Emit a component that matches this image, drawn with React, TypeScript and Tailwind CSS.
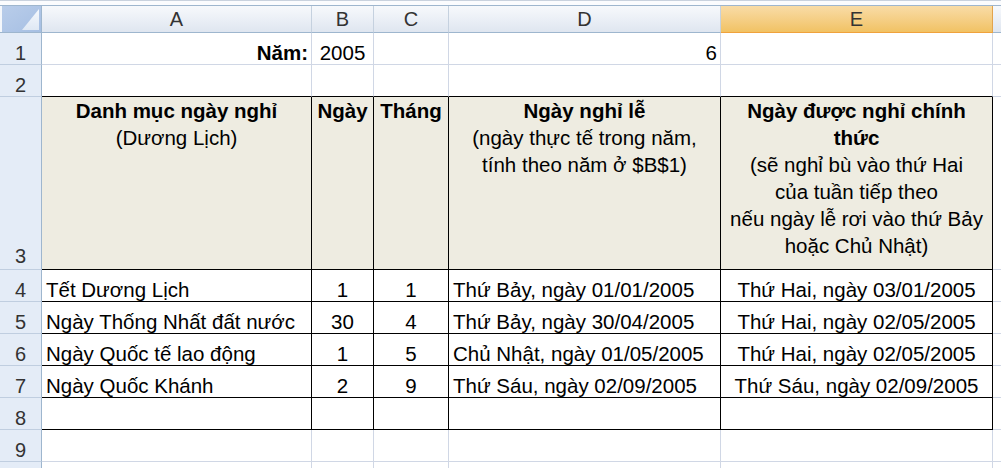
import type { ReactNode } from "react";

type Align = "left" | "center" | "right";

interface CellData {
  text?: string;
  bold?: boolean;
  align?: Align;
}

const COLS = [
  { key: "A", w: "w-[270px]" },
  { key: "B", w: "w-[62px]" },
  { key: "C", w: "w-[75px]" },
  { key: "D", w: "w-[272px]" },
  { key: "E", w: "w-[272px]" },
];

const ALIGN: Record<Align, string> = {
  left: "justify-start pl-[4px]",
  center: "justify-center",
  right: "justify-end pr-[3px]",
};

// rows 4..7 of the holiday table
const HOLIDAYS: Array<[string, string, string, string, string]> = [
  ["Tết Dương Lịch", "1", "1", "Thứ Bảy, ngày 01/01/2005", "Thứ Hai, ngày 03/01/2005"],
  ["Ngày Thống Nhất đất nước", "30", "4", "Thứ Bảy, ngày 30/04/2005", "Thứ Hai, ngày 02/05/2005"],
  ["Ngày Quốc tế lao động", "1", "5", "Chủ Nhật, ngày 01/05/2005", "Thứ Hai, ngày 02/05/2005"],
  ["Ngày Quốc Khánh", "2", "9", "Thứ Sáu, ngày 02/09/2005", "Thứ Sáu, ngày 02/09/2005"],
];

function RowHead({ n, tall }: { n?: number; tall?: boolean }) {
  return (
    <div
      className={`flex w-[42px] shrink-0 items-end justify-center border-r border-b border-r-[#9eb6ce] border-b-[#c0cee0] bg-[#e4ecf7] text-[20px] leading-[22px] text-[#333] ${
        tall ? "pb-[2px]" : ""
      }`}
    >
      {n}
    </div>
  );
}

function Cell({
  w,
  data,
  blackRight,
  blackBottom,
}: {
  w: string;
  data?: CellData;
  blackRight?: boolean;
  blackBottom?: boolean;
}) {
  const align = data?.align ?? "left";
  return (
    <div
      className={`flex shrink-0 items-end whitespace-nowrap border-r border-b text-[20.5px] leading-[22px] ${w} ${
        blackRight ? "border-r-black" : "border-r-[#d0d7e5]"
      } ${blackBottom ? "border-b-black" : "border-b-[#d0d7e5]"} ${ALIGN[align]} ${
        data?.bold ? "font-bold" : ""
      }`}
    >
      {data?.text}
    </div>
  );
}

function Row({
  n,
  cells,
  blackRight,
  blackBottom,
}: {
  n?: number;
  cells: CellData[];
  blackRight?: boolean;
  blackBottom?: boolean;
}) {
  return (
    <div className="flex h-[32px]">
      <RowHead n={n} />
      {COLS.map((c, i) => (
        <Cell
          key={c.key}
          w={c.w}
          data={cells[i]}
          blackRight={blackRight}
          blackBottom={blackBottom}
        />
      ))}
      <div className="flex-1 border-b border-b-[#d0d7e5]" />
    </div>
  );
}

function HeadCell({ w, children }: { w: string; children?: ReactNode }) {
  return (
    <div
      className={`flex shrink-0 flex-col items-center border-r border-b border-r-black border-b-black bg-[#eeece1] text-center text-[20.5px] leading-[27px] whitespace-nowrap ${w}`}
    >
      {children}
    </div>
  );
}

function Corner() {
  return (
    <div className="flex w-[42px] shrink-0 border-r border-b border-r-[#9eb6ce] border-b-[#9eb6ce] bg-[#f4f7fb] pl-[2px]">
      <svg width="39" height="26" viewBox="0 0 39 26" className="block">
        <defs>
          <linearGradient id="tri" x1="0" y1="0" x2="0" y2="1">
            <stop offset="0" stopColor="#f6f9fd" />
            <stop offset="1" stopColor="#dfe8f4" />
          </linearGradient>
          <linearGradient id="box" x1="0" y1="0" x2="1" y2="1">
            <stop offset="0" stopColor="#b9cdea" />
            <stop offset="1" stopColor="#a6bfe3" />
          </linearGradient>
        </defs>
        <rect x="0" y="0" width="39" height="26" fill="url(#box)" />
        <polygon points="20,24 37,24 37,3" fill="url(#tri)" />
      </svg>
    </div>
  );
}

export default function App() {
  return (
    <div className="h-[468px] w-[1001px] overflow-hidden bg-white font-['Liberation_Sans',Arial,sans-serif] text-black">
      {/* bottom edge of the formula bar */}
      <div className="h-[6px] border-t border-b border-t-[#c9d2de] border-b-[#9eb6ce] bg-[#fbfcfe]" />

      {/* column letters */}
      <div className="flex h-[27px]">
        <Corner />
        {COLS.map((c) =>
          c.key === "E" ? (
            <div
              key={c.key}
              className={`flex shrink-0 items-center justify-center border-r border-b border-r-[#e3a44d] border-b-[#f0a23c] bg-gradient-to-b from-[#f9dca6] to-[#f1c263] text-[20px] leading-[26px] text-[#333] ${c.w}`}
            >
              {c.key}
            </div>
          ) : (
            <div
              key={c.key}
              className={`flex shrink-0 items-center justify-center border-r border-b border-r-[#c5d1df] border-b-[#9eb6ce] bg-gradient-to-b from-[#f7f9fc] to-[#dfe6f0] text-[20px] leading-[26px] text-[#333] ${c.w}`}
            >
              {c.key}
            </div>
          ),
        )}
        <div className="flex-1 border-b border-b-[#9eb6ce] bg-gradient-to-b from-[#f7f9fc] to-[#dfe6f0]" />
      </div>

      <Row
        n={1}
        cells={[
          { text: "Năm:", bold: true, align: "right" },
          { text: "2005", align: "center" },
          {},
          { text: "6", align: "right" },
          {},
        ]}
      />
      <Row n={2} cells={[]} blackBottom />

      {/* table header, row 3 */}
      <div className="flex h-[173px]">
        <RowHead n={3} tall />
        <HeadCell w="w-[270px]">
          <span className="font-bold">Danh mục ngày nghỉ</span>
          <span>(Dương Lịch)</span>
        </HeadCell>
        <HeadCell w="w-[62px]">
          <span className="font-bold">Ngày</span>
        </HeadCell>
        <HeadCell w="w-[75px]">
          <span className="font-bold">Tháng</span>
        </HeadCell>
        <HeadCell w="w-[272px]">
          <span className="font-bold">Ngày nghỉ lễ</span>
          <span>(ngày thực tế trong năm,</span>
          <span>tính theo năm ở $B$1)</span>
        </HeadCell>
        <HeadCell w="w-[272px]">
          <span className="font-bold">Ngày được nghỉ chính</span>
          <span className="font-bold">thức</span>
          <span>(sẽ nghỉ bù vào thứ Hai</span>
          <span>của tuần tiếp theo</span>
          <span>nếu ngày lễ rơi vào thứ Bảy</span>
          <span>hoặc Chủ Nhật)</span>
        </HeadCell>
        <div className="flex-1 border-b border-b-[#d0d7e5]" />
      </div>

      {HOLIDAYS.map((h, i) => (
        <Row
          key={h[0]}
          n={i + 4}
          blackRight
          blackBottom
          cells={[
            { text: h[0] },
            { text: h[1], align: "center" },
            { text: h[2], align: "center" },
            { text: h[3], align: "left" },
            { text: h[4], align: "center" },
          ]}
        />
      ))}
      <Row n={8} cells={[]} blackRight blackBottom />
      <Row n={9} cells={[]} />
      <Row cells={[]} />
    </div>
  );
}
